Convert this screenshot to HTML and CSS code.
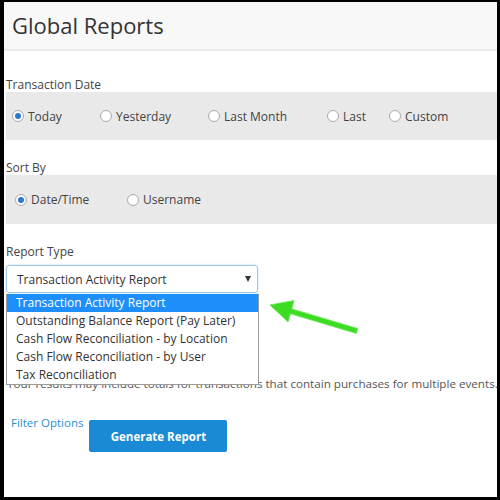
FILE: index.html
```html
<!DOCTYPE html>
<html lang="en">
<head>
    <meta charset="UTF-8">
    <meta name="viewport" content="width=device-width, initial-scale=1.0">
    <title>Global Reports</title>
    <link rel="stylesheet" href="styles.css">
</head>
<body>
  <div class="page">
     <div class="page-header">
        <h1 class="page-title">Global Reports</h1>
     </div>

     <div class="content">
        <p class="field-label">Transaction Date</p>
        <div class="option-band date-band">
           <label class="radio-item"><span class="radio checked"></span>Today</label>
           <label class="radio-item"><span class="radio"></span>Yesterday</label>
           <label class="radio-item"><span class="radio"></span>Last Month</label>
           <label class="radio-item"><span class="radio"></span>Last</label>
           <label class="radio-item"><span class="radio"></span>Custom</label>
        </div>

        <p class="field-label">Sort By</p>
        <div class="option-band sort-band">
           <label class="radio-item"><span class="radio checked"></span>Date/Time</label>
           <label class="radio-item"><span class="radio"></span>Username</label>
        </div>

        <p class="field-label label-report">Report Type</p>
        <div class="select-wrap">
           <div class="select-box">
              <span>Transaction Activity Report</span>
              <span class="select-arrow"></span>
           </div>
           <ul class="select-list">
              <li class="active">Transaction Activity Report</li>
              <li>Outstanding Balance Report (Pay Later)</li>
              <li>Cash Flow Reconciliation - by Location</li>
              <li>Cash Flow Reconciliation - by User</li>
              <li>Tax Reconciliation</li>
           </ul>
        </div>

        <p class="note">Your results may include totals for transactions that contain purchases for multiple events.</p>

        <div class="actions">
           <a href="#" class="filter-link">Filter Options</a>
           <button class="generate-btn" type="button">Generate Report</button>
        </div>
     </div>
  </div>

  <!-- green pointer at the open list -->
  <svg class="pointer" width="500" height="500" viewBox="0 0 500 500">
     <polygon points="270,305 294,300.5 291.8,308.9 357.7,328.6 356.3,333.4 290.4,313.7 288,322" fill="#3bdc22" stroke="#6ee85a" stroke-width="1" stroke-linejoin="round"/>
  </svg>
</body>
</html>
```

FILE: styles.css
```css
* {
  margin: 0;
  padding: 0;
  box-sizing: border-box;
  font-family: "Open Sans", "Liberation Sans", sans-serif;
}

body {
  background-color: #000;
  width: 500px;
  height: 500px;
  overflow: hidden;
}

.page {
  position: relative;
  margin: 2px 3px 3px 4px;
  height: 495px;
  background-color: #fff;
  overflow: hidden;
}

.page-header {
  height: 49px;
  background-color: #f8f8f8;
  border-bottom: 2px solid #ececec;
  padding-left: 8px;
}

.page-title {
  font-size: 22px;
  font-weight: 400;
  line-height: 47px;
  color: #333;
}

.content {
  padding-left: 2px;
}

.field-label {
  font-size: 12px;
  line-height: 15px;
  color: #444;
  margin-top: 20px;
}

.content > .field-label:first-child {
  margin-top: 26px;
}

.label-report {
  margin-bottom: 6px;
}

.option-band {
  display: grid;
  align-items: center;
  height: 48px;
  background-color: #e9e9e9;
}

.date-band {
  grid-template-columns: 88px 108px 119px 62px auto;
  padding-left: 6px;
}

.sort-band {
  grid-template-columns: 112px auto;
  padding-left: 9px;
  height: 49px;
}

.radio-item {
  display: flex;
  align-items: center;
  gap: 4px;
  font-size: 12px;
  color: #444;
}

.radio {
  width: 12px;
  height: 12px;
  border-radius: 50%;
  border: 1px solid #a9a9a9;
  background-color: #fff;
  display: grid;
  place-content: center;
}

.radio.checked::after {
  content: "";
  width: 6px;
  height: 6px;
  border-radius: 50%;
  background-color: #2a78d2;
}

.select-wrap {
  position: relative;
  width: 252px;
}

.select-box {
  display: flex;
  align-items: center;
  justify-content: space-between;
  height: 28px;
  padding: 0 6px 0 10px;
  border: 1px solid #9cc6ea;
  border-radius: 3px;
  box-shadow: 0 0 2px rgba(82, 160, 230, 0.45);
  font-size: 12px;
  color: #333;
}

.select-arrow {
  width: 0;
  height: 0;
  border-left: 3px solid transparent;
  border-right: 3px solid transparent;
  border-top: 6px solid #333;
}

.select-list {
  position: absolute;
  top: 29px;
  left: 0;
  width: 253px;
  list-style: none;
  background-color: #fff;
  border: 1px solid #9a9a9a;
  border-top: none;
  z-index: 2;
}

.select-list li {
  height: 18px;
  line-height: 18px;
  padding-left: 9px;
  font-size: 12px;
  color: #333;
}

.select-list li.active {
  background-color: #1e8ffa;
  color: #fff;
}

.note {
  margin-top: 83px;
  margin-left: 1px;
  font-size: 11.65px;
  line-height: 16px;
  color: #555;
  white-space: nowrap;
}

.actions {
  display: flex;
  align-items: flex-start;
  gap: 6px;
  margin-top: 23px;
  padding-left: 5px;
}

.filter-link {
  font-size: 11.5px;
  line-height: 16px;
  color: #2a8fd0;
  text-decoration: none;
}

.generate-btn {
  margin-top: 5px;
  width: 138px;
  height: 32px;
  border: none;
  border-radius: 2px;
  background-color: #1a8ad6;
  color: #fff;
  font-size: 11.5px;
  font-weight: 700;
}

.pointer {
  position: absolute;
  top: 0;
  left: 0;
  pointer-events: none;
}
```
